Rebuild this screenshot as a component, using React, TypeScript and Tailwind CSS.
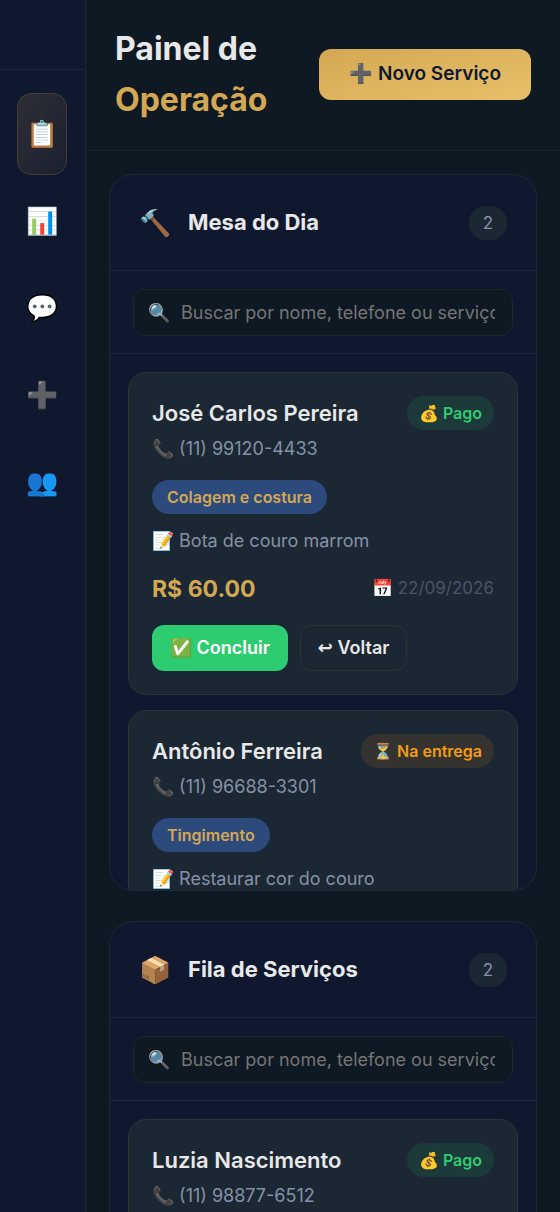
import { useState } from 'react';
import clsx from 'clsx';

interface Service {
  id: string;
  client: string;
  phone: string;
  paid: boolean;
  type: string;
  notes: string;
  price: number;
  date: string;
}

interface Board {
  id: string;
  icon: string;
  title: string;
  services: Service[];
}

const NAV_ITEMS = [
  { id: 'operacao', icon: '📋', label: 'Operação' },
  { id: 'relatorios', icon: '📊', label: 'Relatórios' },
  { id: 'mensagens', icon: '💬', label: 'Mensagens' },
  { id: 'novo', icon: '➕', label: 'Novo serviço' },
  { id: 'clientes', icon: '👥', label: 'Clientes' },
];

const BOARDS: Board[] = [
  {
    id: 'mesa',
    icon: '🔨',
    title: 'Mesa do Dia',
    services: [
      {
        id: 's1',
        client: 'José Carlos Pereira',
        phone: '(11) 99120-4433',
        paid: true,
        type: 'Colagem e costura',
        notes: 'Bota de couro marrom',
        price: 60,
        date: '22/09/2026',
      },
      {
        id: 's2',
        client: 'Antônio Ferreira',
        phone: '(11) 96688-3301',
        paid: false,
        type: 'Tingimento',
        notes: 'Restaurar cor do couro',
        price: 90,
        date: '23/09/2026',
      },
    ],
  },
  {
    id: 'fila',
    icon: '📦',
    title: 'Fila de Serviços',
    services: [
      {
        id: 's3',
        client: 'Luzia Nascimento',
        phone: '(11) 98877-6512',
        paid: true,
        type: 'Troca de salto',
        notes: 'Sandália preta',
        price: 45,
        date: '24/09/2026',
      },
      {
        id: 's4',
        client: 'Marcos Oliveira',
        phone: '(11) 97755-2210',
        paid: false,
        type: 'Costura',
        notes: 'Mochila escolar',
        price: 35,
        date: '25/09/2026',
      },
    ],
  },
];

function Sidebar() {
  const [active, setActive] = useState('operacao');

  return (
    <aside className="w-[86px] shrink-0 border-r border-[#212732] bg-[#0f182e]">
      <div className="h-[70px] border-b border-[#212732]" />
      <nav className="flex flex-col gap-[5px] py-[23px] pr-[18px] pl-[17px]">
        {NAV_ITEMS.map((item) => (
          <button
            key={item.id}
            type="button"
            aria-label={item.label}
            onClick={() => setActive(item.id)}
            className={clsx(
              'flex h-[82px] items-center justify-center rounded-[14px] border text-[26px] leading-none',
              active === item.id
                ? 'border-[#463d32] bg-linear-to-br from-[#2e2e34] to-[#1b2031]'
                : 'border-transparent'
            )}
          >
            {item.icon}
          </button>
        ))}
      </nav>
    </aside>
  );
}

function ServiceCard({ service }: { service: Service }) {
  return (
    <article className="shrink-0 rounded-[18px] border border-[#2c3435] bg-[#1b2733] p-[23px]">
      <div className="flex items-start justify-between">
        <h3 className="text-[22px] leading-[34px] font-semibold">{service.client}</h3>
        <span
          className={clsx(
            'flex h-[34px] items-center rounded-full px-3 text-base font-semibold',
            service.paid ? 'bg-[#1d3a3b] text-[#2ecc71]' : 'bg-[#34332f] text-[#f39c12]'
          )}
        >
          {service.paid ? '💰 Pago' : '⏳ Na entrega'}
        </span>
      </div>
      <p className="mt-1 text-lg leading-[29px] text-[#8492a6]">📞 {service.phone}</p>
      <span className="mt-[17px] flex h-[34px] w-fit items-center rounded-full bg-[#2c4a7c] px-[15px] text-base font-semibold text-[#d4a853]">
        {service.type}
      </span>
      <p className="mt-3 text-lg leading-[29px] text-[#8492a6]">📝 {service.notes}</p>
      <div className="mt-[15px] flex items-center justify-between">
        <strong className="text-[23px] leading-[38px] font-bold text-[#d4a853]">
          R$ {service.price.toFixed(2)}
        </strong>
        <span className="text-[17px] text-[#4a5568]">📅 {service.date}</span>
      </div>
      <div className="mt-[17px] flex gap-3">
        <button
          type="button"
          className="h-[46px] rounded-xl bg-[#2ecc71] px-[18px] text-lg font-semibold text-white"
        >
          ✅ Concluir
        </button>
        <button
          type="button"
          className="h-[46px] rounded-xl border border-[#2c3435] px-[17px] text-lg font-semibold"
        >
          <span className="font-['DejaVu_Sans',sans-serif]">↩</span> Voltar
        </button>
      </div>
    </article>
  );
}

function BoardPanel({ board }: { board: Board }) {
  const [search, setSearch] = useState('');

  const term = search.toLowerCase();
  const services = board.services.filter((s) =>
    `${s.client} ${s.phone} ${s.type}`.toLowerCase().includes(term)
  );

  return (
    <section className="flex max-h-[717px] flex-col overflow-hidden rounded-3xl border border-[#212732] bg-[#0f182e]">
      <header className="flex h-24 shrink-0 items-center justify-between border-b border-[#212732] px-[29px]">
        <h2 className="flex items-center gap-[17px] text-[22px] font-bold">
          <span className="text-[26px] leading-none">{board.icon}</span>
          {board.title}
        </h2>
        <span className="rounded-2xl bg-[#1b2733] px-[14px] py-1 text-[17px] leading-[26px] text-[#8492a6]">
          {board.services.length}
        </span>
      </header>

      {/* Search */}
      <div className="shrink-0 border-b border-[#212732] px-[23px] pt-[18px] pb-[17px]">
        <label className="flex h-[47px] items-center gap-[11px] rounded-xl border border-[#20272a] bg-[#0f1923] pr-[17px] pl-[14px] text-lg">
          <span aria-hidden="true">🔍</span>
          <input
            type="text"
            aria-label={`Buscar em ${board.title}`}
            value={search}
            onChange={(e) => setSearch(e.target.value)}
            placeholder="Buscar por nome, telefone ou serviço..."
            className="min-w-0 flex-1 bg-transparent outline-none placeholder:text-[#757575]"
          />
        </label>
      </div>

      <div className="flex min-h-0 flex-col gap-[15px] overflow-y-auto p-[18px] [scrollbar-width:none]">
        {services.map((service) => (
          <ServiceCard key={service.id} service={service} />
        ))}
      </div>
    </section>
  );
}

export default function App() {
  return (
    <div className="flex h-screen overflow-hidden bg-[#0f1923] font-['Inter',sans-serif] text-[#e8e8e8]">
      <Sidebar />

      <div className="flex min-w-0 flex-1 flex-col">
        <header className="flex shrink-0 items-center justify-between border-b border-[#20272a] px-[29px] pt-[23px] pb-[25px]">
          <h1 className="text-[32px] leading-[51px] font-bold">
            Painel de
            <span className="block text-[#d4a853]">Operação</span>
          </h1>
          <button
            type="button"
            className="h-[51px] rounded-xl bg-linear-to-br from-[#d4a853] to-[#e8c06a] px-[30px] text-[19px] font-semibold whitespace-nowrap text-[#0f182e]"
          >
            ➕ Novo Serviço
          </button>
        </header>

        <main className="flex min-h-0 flex-1 flex-col gap-[30px] overflow-y-auto p-[23px] [scrollbar-width:none] *:shrink-0">
          {BOARDS.map((board) => (
            <BoardPanel key={board.id} board={board} />
          ))}
        </main>
      </div>
    </div>
  );
}
